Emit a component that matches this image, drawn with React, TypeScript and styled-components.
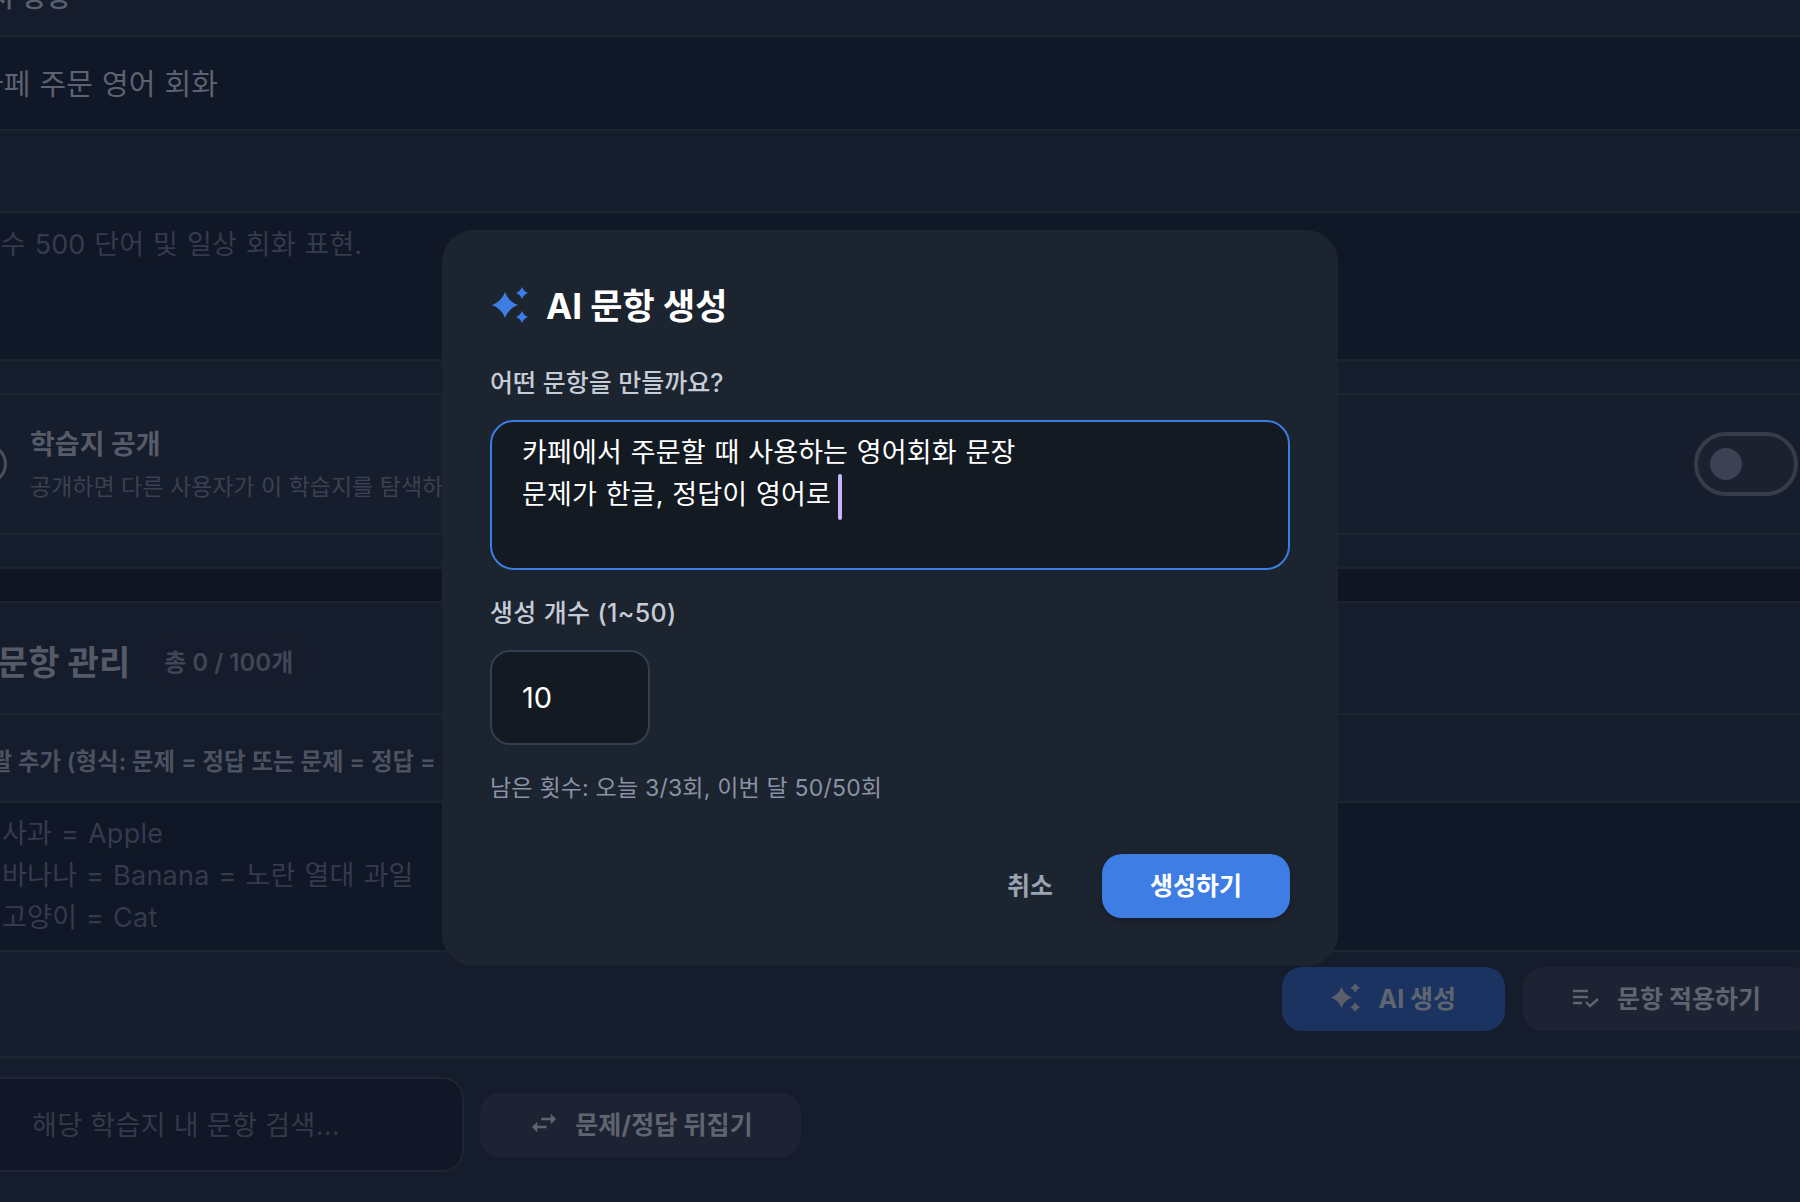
import styled, { createGlobalStyle } from "styled-components";

const GlobalStyle = createGlobalStyle`
  html, body {
    margin: 0;
    padding: 0;
    background: #151c2b;
  }
  * {
    box-sizing: border-box;
  }
`;

const Page = styled.div`
  position: relative;
  width: 1800px;
  height: 1202px;
  overflow: hidden;
  background: #151c2b;
  font-family: Inter, "Noto Sans CJK KR", sans-serif;
`;

const Row = styled.div<{ $h: number; $tone?: "field" | "card" | "well" }>`
  display: flex;
  align-items: center;
  height: ${(p) => p.$h}px;
  border-bottom: 2px solid #1c2331;
  background: ${(p) =>
    p.$tone === "field"
      ? "#101726"
      : p.$tone === "card"
        ? "#161d2c"
        : p.$tone === "well"
          ? "#0f1522"
          : "transparent"};
`;

const TopLabel = styled.div`
  margin: -40px 0 0 -61px;
  font-size: 27px;
  line-height: 40px;
  font-weight: 500;
  white-space: nowrap;
  color: #5b6070;
`;

const FieldText = styled.div`
  margin: -2px 0 0 -23px;
  font-size: 29px;
  color: #5d6272;
  white-space: nowrap;
  word-spacing: 1px;
`;

const HintRow = styled(Row)`
  align-items: flex-start;
`;

const FieldHint = styled.div`
  margin: 11px 0 0 -24px;
  font-size: 27px;
  line-height: 42px;
  color: #353b4c;
  white-space: nowrap;
  word-spacing: 1.5px;
`;

const ShareRow = styled.div`
  display: flex;
  flex: 1;
  align-items: center;
  justify-content: space-between;
  margin-left: -33px;
  padding-right: 2px;
`;

const ShareInfo = styled.div`
  display: flex;
  align-items: center;
  gap: 23px;
`;

const GlobeRing = styled.div`
  width: 40px;
  height: 40px;
  border: 3px solid #4a4f5d;
  border-radius: 50%;
`;

const ShareTitle = styled.div`
  margin-top: 2px;
  font-size: 27px;
  line-height: 36px;
  font-weight: 700;
  color: #565b69;
`;

const ShareDesc = styled.div`
  margin-top: 7px;
  font-size: 23px;
  line-height: 34px;
  color: #3b4151;
  white-space: nowrap;
`;

const Toggle = styled.div`
  display: flex;
  align-items: center;
  width: 104px;
  height: 64px;
  padding-left: 12px;
  border: 4px solid #373b4a;
  border-radius: 32px;
  background: #1c2130;
`;

const ToggleKnob = styled.div`
  width: 32px;
  height: 32px;
  border-radius: 50%;
  background: #3c4153;
`;

const SectionHead = styled.div`
  display: flex;
  align-items: center;
  gap: 20px;
  margin: 4px 0 0 -3px;
`;

const SectionTitle = styled.div`
  font-size: 34px;
  font-weight: 700;
  color: #555a68;
  white-space: nowrap;
`;

const CountChip = styled.div`
  display: flex;
  align-items: center;
  height: 50px;
  padding: 0 14px;
  border-radius: 25px;
  background: #161c2b;
  font-size: 24px;
  font-weight: 600;
  color: #404656;
  white-space: nowrap;
`;

const BulkLabel = styled.div`
  margin: 3px 0 0 -31px;
  font-size: 23.4px;
  font-weight: 600;
  color: #4c5261;
  white-space: nowrap;
`;

const SampleList = styled.div`
  margin: 10px 0 0 2px;
  font-size: 27px;
  line-height: 42px;
  letter-spacing: 0.25px;
  color: #353b4c;
  white-space: pre-line;
  align-self: flex-start;
  word-spacing: 1px;
`;

const ActionRow = styled(Row)`
  align-items: flex-start;
  justify-content: flex-end;
  gap: 18px;
  padding-top: 15px;
  margin-right: -11px;
`;

const DimButton = styled.div<{ $primary?: boolean }>`
  display: flex;
  align-items: center;
  justify-content: center;
  gap: 18px;
  height: 64px;
  padding: 0 ${(p) => (p.$primary ? 49 : 50)}px 4px;
  border-radius: 20px;
  background: ${(p) => (p.$primary ? "#1b3360" : "#1d2333")};
  font-size: 25px;
  font-weight: 700;
  color: #5f6570;
  white-space: nowrap;
  flex-shrink: 0;
`;

const SearchRow = styled.div`
  display: flex;
  align-items: center;
  gap: 16px;
  margin: 19px 0 0 -40px;
`;

const SearchBox = styled.div`
  display: flex;
  align-items: center;
  width: 504px;
  height: 95px;
  padding: 0 0 2px 70px;
  border: 2px solid #1e2534;
  border-radius: 22px;
  background: #111726;
  font-size: 27px;
  letter-spacing: 0.35px;
  color: #333a4a;
  white-space: nowrap;
`;

const FlipButton = styled(DimButton)`
  gap: 15px;
  width: 321px;
  padding: 0 0 4px;
  letter-spacing: 0.1px;
`;

const Modal = styled.div`
  position: absolute;
  left: 442px;
  top: 230px;
  display: flex;
  flex-direction: column;
  width: 896px;
  height: 736px;
  padding: 48px;
  border-radius: 32px;
  background: #1c2430;
`;

const ModalHead = styled.div`
  display: flex;
  align-items: center;
  gap: 18px;
  height: 54px;
  margin-bottom: 33px;
  padding-left: 2px;
`;

const ModalTitle = styled.div`
  margin-top: -4px;
  font-size: 35px;
  font-weight: 700;
  color: #ffffff;
`;

const FieldLabel = styled.div<{ $spread?: boolean }>`
  height: 36px;
  margin-bottom: 20px;
  font-size: 25px;
  line-height: 36px;
  font-weight: 500;
  letter-spacing: ${(p) => (p.$spread ? "0.35px" : "0")};
  color: #c5ccd6;
`;

const PromptBox = styled.div`
  height: 150px;
  margin: -1px 0 25px;
  padding: 10px 30px;
  border: 2px solid #3b7de4;
  border-radius: 24px;
  background: #131a22;
  font-size: 27px;
  line-height: 42px;
  letter-spacing: 0.15px;
  color: #ffffff;
  word-spacing: 1px;
  white-space: pre-line;
`;

const Caret = styled.span`
  display: inline-block;
  width: 4px;
  height: 46px;
  margin: -4px 0 -4px 7px;
  border-radius: 2px;
  background: #c4b5fd;
  vertical-align: middle;
`;

const CountBox = styled.div`
  display: flex;
  align-items: center;
  width: 160px;
  height: 95px;
  margin-top: -1px;
  padding-left: 30px;
  border: 2px solid #333e50;
  border-radius: 20px;
  background: #131a22;
  font-size: 29px;
  color: #ffffff;
`;

const QuotaText = styled.div`
  margin-top: 26px;
  font-size: 23px;
  line-height: 34px;
  letter-spacing: 0.2px;
  color: #8a93a5;
`;

const ModalFoot = styled.div`
  display: flex;
  align-items: center;
  justify-content: flex-end;
  gap: 16px;
  margin-top: 49px;
`;

const CancelButton = styled.div`
  padding: 0 33px 5px;
  font-size: 25px;
  font-weight: 600;
  color: #9aa3b2;
`;

const SubmitButton = styled.div`
  display: flex;
  align-items: center;
  justify-content: center;
  width: 188px;
  height: 64px;
  padding-bottom: 5px;
  border-radius: 20px;
  background: #3d7de4;
  box-shadow: 0 2px 6px rgba(0, 0, 0, 0.25);
  font-size: 25px;
  font-weight: 700;
  color: #ffffff;
`;

const Sparkles = ({ size, color }: { size: number; color: string }) => (
  <svg width={size} height={size} viewBox="0 0 36 36" fill={color}>
    <path d="M13 5 Q16.5 14.5 26 18 Q16.5 21.5 13 31 Q9.5 21.5 0 18 Q9.5 14.5 13 5Z" />
    <path d="M30 0 Q31.7 4.3 36 6 Q31.7 7.7 30 12 Q28.3 7.7 24 6 Q28.3 4.3 30 0Z" />
    <path d="M30 24 Q31.7 28.3 36 30 Q31.7 31.7 30 36 Q28.3 31.7 24 30 Q28.3 28.3 30 24Z" />
  </svg>
);

const ApplyIcon = () => (
  <svg width="26" height="28" viewBox="0 0 26 28" fill="none" stroke="#5f6570" strokeWidth="2.4">
    <path d="M0 8H15M0 14H15M0 20H9" />
    <path d="M13 19L17 23L25 16" />
  </svg>
);

const SwapIcon = () => (
  <svg width="32" height="32" viewBox="0 0 24 24" fill="#5f6570">
    <path d="M6.99 11 3 15l3.99 4v-3H14v-2H6.99v-3zM21 9l-3.99-4v3H10v2h7.01v3L21 9z" />
  </svg>
);

const App = () => {
  return (
    <Page>
      <GlobalStyle />
      <Row $h={37}>
        <TopLabel>학습서 명칭</TopLabel>
      </Row>
      <Row $h={94} $tone="field">
        <FieldText>카페 주문 영어 회화</FieldText>
      </Row>
      <Row $h={82} />
      <HintRow $h={148} $tone="field">
        <FieldHint>필수 500 단어 및 일상 회화 표현.</FieldHint>
      </HintRow>
      <Row $h={34} />
      <Row $h={140} $tone="card">
        <ShareRow>
          <ShareInfo>
            <GlobeRing />
            <div>
              <ShareTitle>학습지 공개</ShareTitle>
              <ShareDesc>공개하면 다른 사용자가 이 학습지를 탐색하고 사용할 수 있습니다.</ShareDesc>
            </div>
          </ShareInfo>
          <Toggle>
            <ToggleKnob />
          </Toggle>
        </ShareRow>
      </Row>
      <Row $h={34} />
      <Row $h={34} $tone="well" />
      <Row $h={112}>
        <SectionHead>
          <SectionTitle>문항 관리</SectionTitle>
          <CountChip>총 0 / 100개</CountChip>
        </SectionHead>
      </Row>
      <Row $h={88}>
        <BulkLabel>일괄 추가 (형식: 문제 = 정답 또는 문제 = 정답 = 설명)</BulkLabel>
      </Row>
      <Row $h={149} $tone="field">
        <SampleList>{"사과 = Apple\n바나나 = Banana = 노란 열대 과일\n고양이 = Cat"}</SampleList>
      </Row>
      <ActionRow $h={106}>
        <DimButton $primary>
          <Sparkles size={29} color="#5a5f6a" />
          AI 생성
        </DimButton>
        <DimButton>
          <ApplyIcon />
          문항 적용하기
        </DimButton>
      </ActionRow>
      <SearchRow>
        <SearchBox>해당 학습지 내 문항 검색...</SearchBox>
        <FlipButton>
          <SwapIcon />
          문제/정답 뒤집기
        </FlipButton>
      </SearchRow>
      <Modal>
        <ModalHead>
          <Sparkles size={36} color="#3d7de4" />
          <ModalTitle>AI 문항 생성</ModalTitle>
        </ModalHead>
        <FieldLabel>어떤 문항을 만들까요?</FieldLabel>
        <PromptBox>
          {"카페에서 주문할 때 사용하는 영어회화 문장\n문제가 한글, 정답이 영어로"}
          <Caret />
        </PromptBox>
        <FieldLabel $spread>생성 개수 (1~50)</FieldLabel>
        <CountBox>10</CountBox>
        <QuotaText>남은 횟수: 오늘 3/3회, 이번 달 50/50회</QuotaText>
        <ModalFoot>
          <CancelButton>취소</CancelButton>
          <SubmitButton>생성하기</SubmitButton>
        </ModalFoot>
      </Modal>
    </Page>
  );
};

export default App;
